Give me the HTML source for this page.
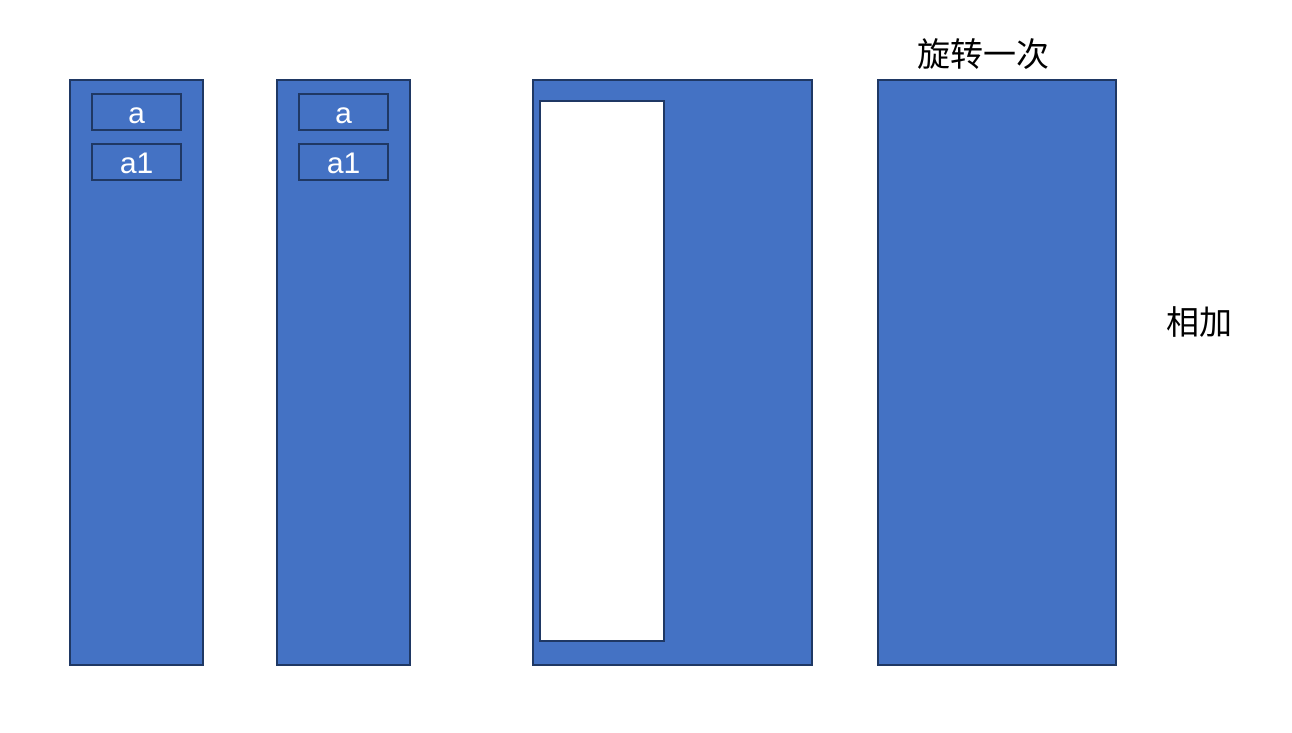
<!DOCTYPE html>
<html><head><meta charset="utf-8"><style>
body{margin:0;width:1292px;height:733px;background:#fff;position:relative;overflow:hidden;font-family:"Liberation Sans","Noto Sans CJK SC",sans-serif}
.b{position:absolute;background:#4472c4;border:2px solid #1f3864;box-sizing:border-box}
.i{position:absolute;border:2px solid #1f3864;box-sizing:border-box;color:#fff;font-size:30px;text-align:center;line-height:37px}
.t{position:absolute;font-size:33px;color:#000;white-space:nowrap;font-family:"Noto Sans CJK SC",sans-serif;line-height:1}
</style></head><body>
<div class="b" style="left:69px;top:79px;width:135px;height:587px"></div>
<div class="i" style="left:91px;top:93px;width:91px;height:38px">a</div>
<div class="i" style="left:91px;top:143px;width:91px;height:38px">a1</div>
<div class="b" style="left:276px;top:79px;width:135px;height:587px"></div>
<div class="i" style="left:298px;top:93px;width:91px;height:38px">a</div>
<div class="i" style="left:298px;top:143px;width:91px;height:38px">a1</div>
<div class="b" style="left:532px;top:79px;width:281px;height:587px"></div>
<div style="position:absolute;left:539px;top:100px;width:126px;height:542px;background:#fff;border:2px solid #1f3864;box-sizing:border-box"></div>
<div class="b" style="left:877px;top:79px;width:240px;height:587px"></div>
<div class="t" style="left:917px;top:36px">旋转一次</div>
<div class="t" style="left:1166px;top:304px">相加</div>
</body></html>
